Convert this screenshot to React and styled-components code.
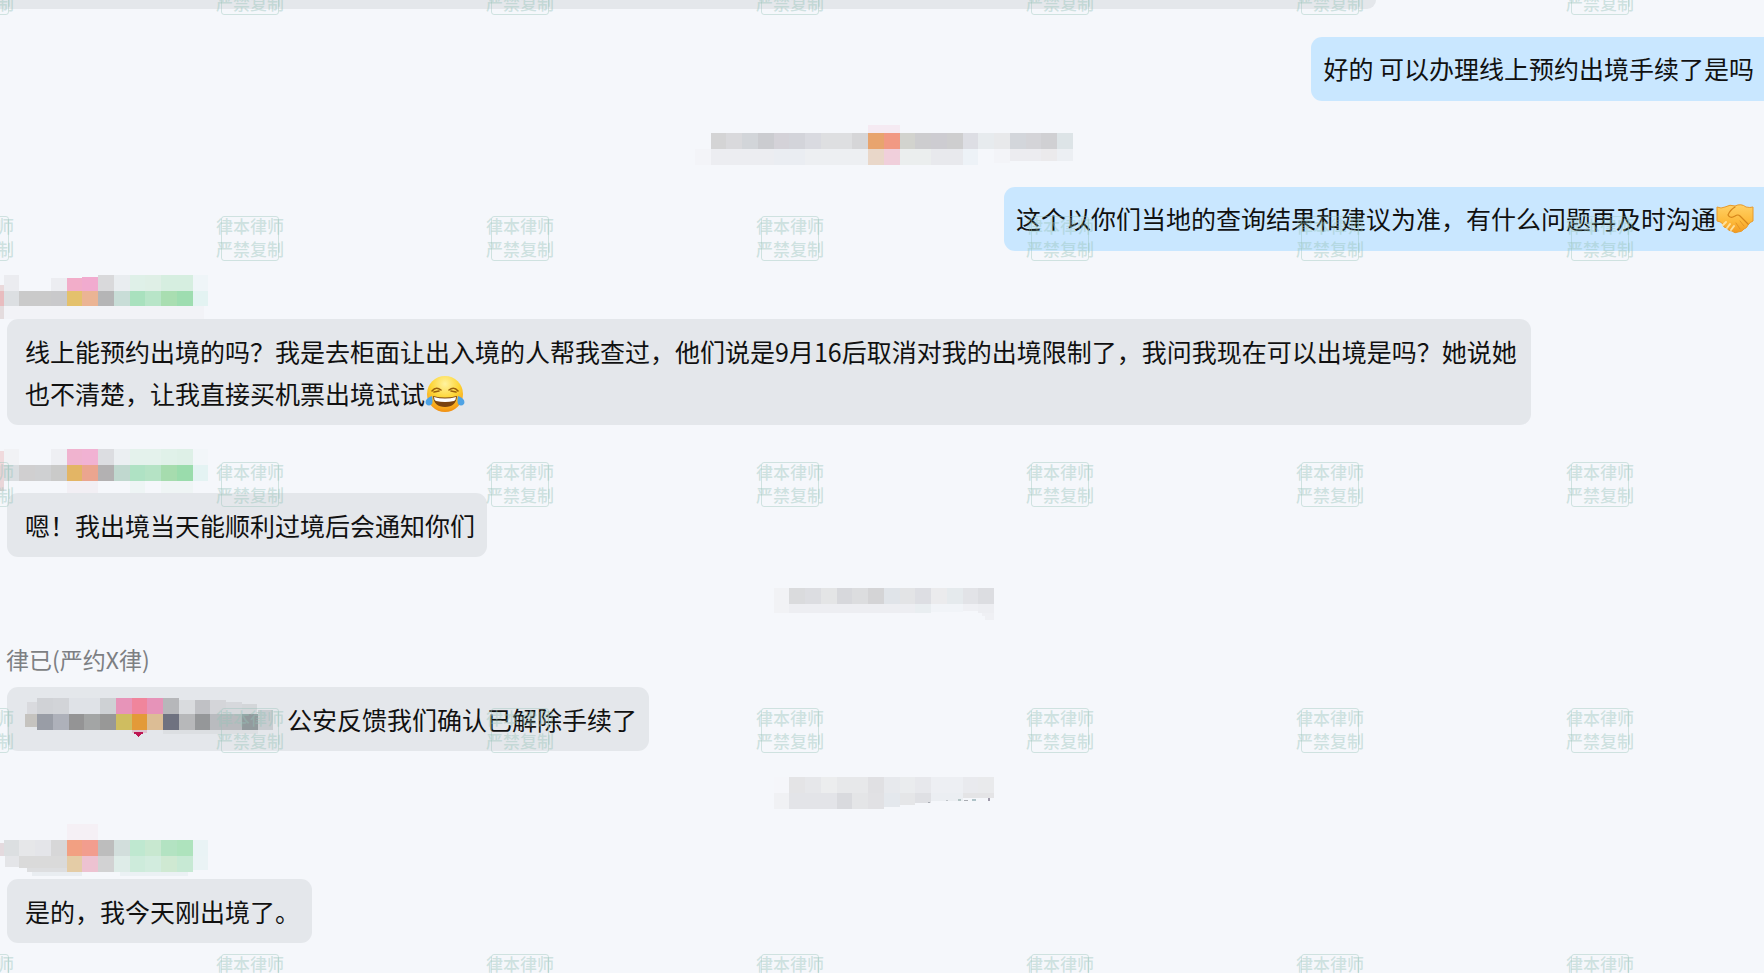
import React from "react";
import styled, { createGlobalStyle } from "styled-components";

// 名字旁边的马赛克, 每格: [x, y, 宽, 高, 颜色]
const nameA = [
  [0, 10, 4, 6, "#ead9db"],
  [0, 16, 4, 15, "#e8bcbf"],
  [0, 31, 4, 13, "#e4dcde"],
  [4, 0, 15, 16, "#ebecf0"],
  [51, 3, 16, 13, "#ecedf1"],
  [67, 3, 15, 13, "#f2adc9"],
  [82, 2, 16, 14, "#f1abcf"],
  [98, 0, 16, 16, "#d9d9db"],
  [114, 0, 16, 16, "#e9edf0"],
  [130, 0, 15, 16, "#dff0e8"],
  [145, 0, 16, 16, "#dfefe6"],
  [161, 0, 32, 16, "#d6eee0"],
  [193, 0, 15, 16, "#eff5f8"],
  [4, 16, 15, 15, "#dcdfe2"],
  [19, 16, 32, 15, "#cacaca"],
  [51, 16, 16, 15, "#c9c9cb"],
  [67, 16, 15, 15, "#e4c16c"],
  [82, 16, 16, 15, "#ebb494"],
  [98, 16, 16, 15, "#b5b5b6"],
  [114, 16, 16, 15, "#c8ddd7"],
  [130, 16, 15, 15, "#a9e1be"],
  [145, 16, 16, 15, "#b8e5c8"],
  [161, 16, 16, 15, "#a9deb1"],
  [177, 16, 16, 15, "#9eddb0"],
  [193, 16, 15, 15, "#e3f3f2"],
  [4, 31, 200, 13, "#f2f3f7"],
];

const nameB = [
  [0, 2, 4, 14, "#f0dadd"],
  [0, 16, 4, 26, "#ead6d9"],
  [4, 0, 15, 16, "#f1f2f5"],
  [51, 0, 16, 16, "#eeeff3"],
  [67, 0, 15, 16, "#f0b3cf"],
  [82, 0, 16, 16, "#f1b2d3"],
  [98, 0, 16, 16, "#dcdde1"],
  [114, 0, 16, 16, "#ebeff2"],
  [130, 0, 31, 16, "#e4f2ec"],
  [161, 0, 16, 16, "#e0f1e9"],
  [177, 0, 16, 16, "#def0e7"],
  [193, 0, 15, 16, "#f2f6f9"],
  [4, 16, 15, 16, "#dadee1"],
  [19, 16, 16, 16, "#d0cfd0"],
  [35, 16, 16, 16, "#cfd0d2"],
  [51, 16, 16, 16, "#cacac9"],
  [67, 16, 15, 16, "#e3b565"],
  [82, 16, 16, 16, "#eba58f"],
  [98, 16, 16, 16, "#b3b1b2"],
  [114, 16, 16, 16, "#c0d8cf"],
  [130, 16, 15, 16, "#afe2c4"],
  [145, 16, 16, 16, "#b5e3c5"],
  [161, 16, 16, 16, "#a6dcae"],
  [177, 16, 16, 16, "#9adcac"],
  [193, 16, 15, 16, "#e4f3f3"],
  [67, 32, 31, 12, "#f2eff4"],
  [130, 32, 15, 12, "#eef5f5"],
  [161, 32, 32, 12, "#eff5f5"],
];

const nameC = [
  [67, -11, 31, 16, "#f5f0f5"],
  [0, 8, 4, 13, "#e4dade"],
  [4, 5, 15, 16, "#dcdfe1"],
  [19, 5, 16, 16, "#e6e7e9"],
  [35, 5, 16, 16, "#e4e5e9"],
  [51, 5, 16, 16, "#d7d7d8"],
  [67, 5, 15, 16, "#f2a082"],
  [82, 5, 16, 16, "#f29d8e"],
  [98, 5, 16, 16, "#bdbdbd"],
  [114, 5, 16, 16, "#d2dedc"],
  [130, 5, 15, 16, "#bfe8d0"],
  [145, 5, 16, 16, "#c8e8d0"],
  [161, 5, 16, 16, "#b3e3c2"],
  [177, 5, 16, 16, "#aee3bd"],
  [193, 5, 15, 16, "#e9f3f5"],
  [5, 21, 14, 11, "#e4e5e8"],
  [19, 21, 48, 12, "#dadada"],
  [27, 33, 40, 4, "#dddee0"],
  [67, 21, 15, 16, "#e4cca6"],
  [82, 21, 16, 16, "#edc2d1"],
  [98, 21, 16, 16, "#d2d2d3"],
  [114, 21, 16, 16, "#deece8"],
  [130, 21, 15, 16, "#cdebdb"],
  [145, 21, 16, 16, "#d2ecde"],
  [161, 21, 16, 16, "#cfe9d2"],
  [177, 21, 16, 16, "#c7e9d4"],
  [193, 21, 15, 14, "#eaf3f5"],
  [32, 37, 50, 4, "#e9edf1"],
  [120, 37, 68, 4, "#ebf1f4"],
];

// 时间行
const timeA = [
  [173, 0, 32, 8, "#f5eaf2"],
  [16, 8, 15, 16, "#d4d4d5"],
  [31, 8, 16, 16, "#d9d9dc"],
  [47, 8, 16, 16, "#d2d5d9"],
  [63, 8, 16, 16, "#cbccd0"],
  [79, 8, 15, 16, "#d4d2d8"],
  [94, 8, 16, 16, "#d3d4da"],
  [110, 8, 16, 16, "#d9dae0"],
  [126, 8, 31, 16, "#dedfe1"],
  [157, 8, 16, 16, "#d6d6d8"],
  [173, 8, 16, 16, "#e8a46e"],
  [189, 8, 16, 16, "#f19983"],
  [205, 8, 15, 16, "#d2d3ce"],
  [220, 8, 16, 16, "#cdcdcf"],
  [236, 8, 16, 16, "#cdccd1"],
  [252, 8, 16, 16, "#cececf"],
  [268, 8, 15, 16, "#dddee4"],
  [283, 8, 16, 16, "#e7ebee"],
  [299, 8, 16, 16, "#e8e9eb"],
  [315, 8, 16, 16, "#d3d6db"],
  [331, 8, 15, 16, "#d4d4d8"],
  [346, 8, 16, 16, "#d0d0d3"],
  [362, 8, 16, 16, "#dde4e7"],
  [0, 24, 16, 16, "#f3f4f8"],
  [16, 24, 63, 16, "#ecedf1"],
  [79, 24, 31, 16, "#eaedf2"],
  [110, 24, 63, 16, "#edeff2"],
  [173, 24, 16, 16, "#e9d7c9"],
  [189, 24, 16, 16, "#f0cfdb"],
  [205, 24, 31, 16, "#ebeeee"],
  [236, 24, 32, 16, "#e8e9ed"],
  [268, 24, 15, 16, "#edf2f7"],
  [299, 24, 16, 14, "#f3f4f8"],
  [315, 24, 31, 12, "#ececf0"],
  [346, 24, 16, 12, "#ebeaec"],
  [362, 24, 16, 12, "#eceff3"],
];

const timeB = [
  [0, 7, 15, 16, "#f1f2f5"],
  [15, 7, 16, 16, "#dadbdd"],
  [31, 7, 16, 16, "#dcdde1"],
  [47, 7, 16, 16, "#e4e5e6"],
  [63, 7, 15, 16, "#d7d8dc"],
  [78, 7, 16, 16, "#dcdddf"],
  [94, 7, 16, 16, "#d4d4d6"],
  [110, 7, 16, 16, "#e0e4e9"],
  [126, 7, 15, 16, "#e3e4e6"],
  [141, 7, 16, 16, "#dddee3"],
  [157, 7, 16, 16, "#ebebed"],
  [173, 7, 16, 16, "#e5eaed"],
  [189, 7, 15, 16, "#e2e3e7"],
  [204, 7, 16, 16, "#dcdde1"],
  [0, 23, 15, 9, "#f1f2f5"],
  [15, 23, 126, 9, "#edeef2"],
  [141, 23, 16, 9, "#e9eef1"],
  [157, 23, 32, 8, "#f1f4f8"],
  [189, 23, 15, 7, "#eff0f4"],
  [204, 23, 16, 9, "#edeef2"],
  [208, 32, 12, 3, "#eff0f4"],
  [211, 35, 9, 4, "#eff0f4"],
];

const timeC = [
  [0, 2, 15, 16, "#f5f6fa"],
  [15, 2, 16, 16, "#e4e4e6"],
  [31, 2, 16, 16, "#e6e7ea"],
  [47, 2, 16, 16, "#ecedee"],
  [63, 2, 31, 16, "#e7e8ea"],
  [94, 2, 16, 16, "#e0e0e3"],
  [110, 2, 16, 16, "#e7e9ed"],
  [126, 2, 15, 16, "#eaecee"],
  [141, 2, 16, 16, "#e7e8ec"],
  [157, 2, 32, 16, "#edeff3"],
  [189, 2, 15, 16, "#e9eaee"],
  [204, 2, 16, 16, "#e9eaec"],
  [0, 18, 15, 16, "#f0f1f4"],
  [15, 18, 48, 16, "#e3e4e8"],
  [63, 18, 15, 16, "#d9dade"],
  [78, 18, 16, 16, "#e4e5e7"],
  [94, 18, 16, 16, "#e1e1e4"],
  [110, 18, 16, 14, "#e4e8ed"],
  [126, 18, 15, 12, "#e5e6e8"],
  [141, 18, 16, 10, "#dfe0e4"],
  [157, 18, 32, 8, "#ebeef2"],
  [189, 18, 31, 5, "#e4e4e6"],
  [154, 27, 2, 1, "#a9adb4"],
  [172, 25, 2, 1, "#bfc4c9"],
  [184, 24, 3, 2, "#b3c4c4"],
  [190, 25, 4, 1, "#a9acb2"],
  [198, 24, 4, 2, "#afc3c8"],
  [214, 23, 2, 3, "#9f9aaa"],
];

const quoted = [
  [0, 16, 12, 13, "#c5c3bf"],
  [2, 4, 10, 12, "#d9dade"],
  [12, 0, 16, 16, "#d0d2d6"],
  [28, 0, 16, 16, "#d2d4d8"],
  [44, 0, 31, 16, "#dfe2e7"],
  [75, 0, 16, 16, "#ced1d4"],
  [91, 0, 16, 16, "#e794b9"],
  [107, 0, 15, 16, "#f0859c"],
  [122, 0, 16, 16, "#e693b9"],
  [138, 0, 16, 16, "#b6b7ba"],
  [154, 2, 16, 14, "#d9dbde"],
  [170, 2, 15, 14, "#c0c1c5"],
  [185, 2, 16, 14, "#d4d5d9"],
  [201, 4, 16, 12, "#d6d8dc"],
  [217, 6, 15, 10, "#d3d6d9"],
  [12, 16, 16, 16, "#999da6"],
  [28, 16, 16, 16, "#aeb1ba"],
  [44, 16, 15, 16, "#949495"],
  [59, 16, 16, 16, "#a3a5a5"],
  [75, 16, 16, 16, "#989897"],
  [91, 16, 16, 16, "#cfbd60"],
  [107, 16, 15, 16, "#e39a38"],
  [122, 16, 16, 16, "#dcbd95"],
  [138, 16, 16, 16, "#6f7280"],
  [154, 16, 16, 16, "#b7b8ba"],
  [170, 16, 15, 16, "#959799"],
  [185, 16, 32, 16, "#b9bbbf"],
  [217, 16, 16, 16, "#929a9d"],
  [233, 12, 15, 20, "#c8ccd0"],
  [107, 32, 15, 3, "#dfc4cf"],
  [109, 34, 9, 2, "#bd1653"],
  [111, 36, 5, 1, "#bd1653"],
  [112, 37, 3, 1, "#bd1653"],
  [113, 38, 1, 1, "#bd1653"],
  [138, 32, 95, 4, "#dcdfe2"],
];

const marks = Array.from({ length: 35 }, (_, i) => i);

const Mosaic = ({ cells, width, height }) => (
  <Blocks width={width} height={height} shapeRendering="crispEdges" aria-hidden="true">
    {cells.map(([x, y, w, h, color], i) => (
      <rect key={i} x={x} y={y} width={w} height={h} fill={color} />
    ))}
  </Blocks>
);

const Laugh = () => (
  <Emoji viewBox="0 0 40 40" width="40" height="40" role="img" aria-label="笑哭">
    <defs>
      <radialGradient id="face" cx="50%" cy="22%" r="80%">
        <stop offset="0" stopColor="#fff3a0" />
        <stop offset="0.5" stopColor="#fdd535" />
        <stop offset="0.85" stopColor="#f8a51c" />
        <stop offset="1" stopColor="#ee8a10" />
      </radialGradient>
    </defs>
    <circle cx="20" cy="20" r="18" fill="url(#face)" />
    <path d="M7 17 Q11 12 16 16 M9 18 L14 17" fill="none" stroke="#9a5f0c" strokeWidth="1.6" strokeLinecap="round" />
    <path d="M33 17 Q29 12 24 16 M31 18 L26 17" fill="none" stroke="#9a5f0c" strokeWidth="1.6" strokeLinecap="round" />
    <path d="M8 22 Q20 25 32 22 Q31 33 20 33 Q9 33 8 22 Z" fill="#7a4310" />
    <path d="M9 23 Q20 26 31 23 Q31 26 29 27 Q20 29 11 27 Q9 26 9 23 Z" fill="#fff" />
    <path d="M7 22 Q-1 25 1 30 Q4 33 7 30 Q8 27 7 22 Z" fill="#4fa3e4" />
    <path d="M33 22 Q41 25 39 30 Q36 33 33 30 Q32 27 33 22 Z" fill="#4fa3e4" />
  </Emoji>
);

const Handshake = () => (
  <Emoji viewBox="0 0 38 30" width="38" height="30" role="img" aria-label="握手">
    <defs>
      <linearGradient id="hand" x1="0" y1="0" x2="0" y2="1">
        <stop offset="0" stopColor="#ffd166" />
        <stop offset="0.6" stopColor="#fdb93a" />
        <stop offset="1" stopColor="#f29a20" />
      </linearGradient>
    </defs>
    <path d="M1 3 Q5 5 9 3 Q14 0 19 2 Q25 -1 30 3 Q34 4 37 3 L37 17 Q34 18 32 21 Q31 24 28 25 Q26 28 22 28 Q19 30 16 27 Q12 27 11 24 Q7 24 7 20 Q4 17 1 17 Z" fill="url(#hand)" stroke="#e89a2a" strokeWidth="1" />
    <path d="M19 3 Q14 6 12 11 Q14 15 19 12 Q22 10 24 12 L32 20" fill="none" stroke="#d5851a" strokeWidth="1.2" strokeLinecap="round" />
    <path d="M24 17 L28 22 M20 19 L24 25" fill="none" stroke="#e39428" strokeWidth="1" strokeLinecap="round" />
    <path d="M10 18 L7 21 M14 20 L11 24 M18 22 L15 26" fill="none" stroke="#ffe09a" strokeWidth="2" strokeLinecap="round" />
  </Emoji>
);

const App = () => {
  return (
    <Page>
      <GlobalStyle />
      <Feed>
        <BubbleTail />
        <Bubble $mine>好的 可以办理线上预约出境手续了是吗</Bubble>
        <Time>
          <Mosaic cells={timeA} width={378} height={38} />
        </Time>
        <Bubble $mine>
          这个以你们当地的查询结果和建议为准，有什么问题再及时沟通
          <Handshake />
        </Bubble>
        <Message>
          <Mosaic cells={nameA} width={208} height={44} />
          <Bubble>
            线上能预约出境的吗？我是去柜面让出入境的人帮我查过，他们说是9月16后取消对我的出境限制了，我问我现在可以出境是吗？她说她也不清楚，让我直接买机票出境试试
            <Laugh />
          </Bubble>
        </Message>
        <Message>
          <Mosaic cells={nameB} width={208} height={44} />
          <Bubble>嗯！我出境当天能顺利过境后会通知你们</Bubble>
        </Message>
        <Time>
          <Mosaic cells={timeB} width={220} height={38} />
        </Time>
        <Message>
          <Sender>律已(严约X律)</Sender>
          <Bubble>
            <Quote>
              <Mosaic cells={quoted} width={248} height={42} />
              公安反馈我们确认已解除手续了
            </Quote>
          </Bubble>
        </Message>
        <Time>
          <Mosaic cells={timeC} width={220} height={36} />
        </Time>
        <Message>
          <Mosaic cells={nameC} width={208} height={44} />
          <Bubble>是的，我今天刚出境了。</Bubble>
        </Message>
      </Feed>
      <Watermarks aria-hidden="true">
        {marks.map((i) => (
          <Mark key={i}>
            <span>律本律师</span>
            <span>严禁复制</span>
          </Mark>
        ))}
      </Watermarks>
    </Page>
  );
};

const GlobalStyle = createGlobalStyle`
  * {
    box-sizing: border-box;
  }
  body {
    margin: 0;
    background-color: #f5f7fb;
    font-family: "Noto Sans CJK SC", sans-serif;
  }
`;
const Page = styled.div`
  position: relative;
  height: 100vh;
  overflow: hidden;
`;
const Feed = styled.main`
  display: flex;
  flex-direction: column;
  gap: 24px;
`;
const Bubble = styled.div`
  align-self: ${(props) => (props.$mine ? "flex-end" : "flex-start")};
  max-width: calc(100% - 240px);
  margin-left: 7px;
  padding: ${(props) => (props.$mine ? "10px 10px 12px 12px" : "11px 12px 11px 18px")};
  border-radius: ${(props) => (props.$mine ? "11px 0 0 11px" : "11px")};
  background-color: ${(props) => (props.$mine ? "#c9e7ff" : "#e4e7eb")};
  color: #111;
  font-size: 25px;
  line-height: 42px;
`;
// 上一条消息露出来的底边
const BubbleTail = styled.div`
  width: 78%;
  height: 9px;
  margin-bottom: 4px;
  border-radius: 0 0 11px 0;
  background-color: #e4e7eb;
`;
const Message = styled.section`
  display: flex;
  flex-direction: column;
`;
const Sender = styled.div`
  padding: 0 0 12px 6px;
  font-size: 23px;
  line-height: 32px;
  color: #7d7f83;
`;
const Time = styled.div`
  display: flex;
  justify-content: center;
  padding-left: 4px;
`;
const Quote = styled.div`
  display: flex;
  align-items: center;
  gap: 14px;
`;
const Blocks = styled.svg`
  display: block;
  flex: none;
  overflow: visible;
`;
const Emoji = styled.svg`
  display: inline-block;
  vertical-align: middle;
  margin: -7px 0 -1px;
`;
const Watermarks = styled.div`
  position: absolute;
  top: -32px;
  left: -54px;
  display: grid;
  grid-template-columns: repeat(7, 270px);
  grid-auto-rows: 246px;
  pointer-events: none;
`;
const Mark = styled.div`
  position: relative;
  display: flex;
  flex-direction: column;
  align-self: start;
  justify-self: start;
  font-size: 17px;
  font-weight: 500;
  line-height: 23px;
  color: rgba(150, 195, 185, 0.42);
  &::before {
    content: "";
    position: absolute;
    inset: 2px 5px -1px;
    border: 1px solid rgba(150, 195, 185, 0.4);
    border-radius: 3px;
  }
`;
export default App;
